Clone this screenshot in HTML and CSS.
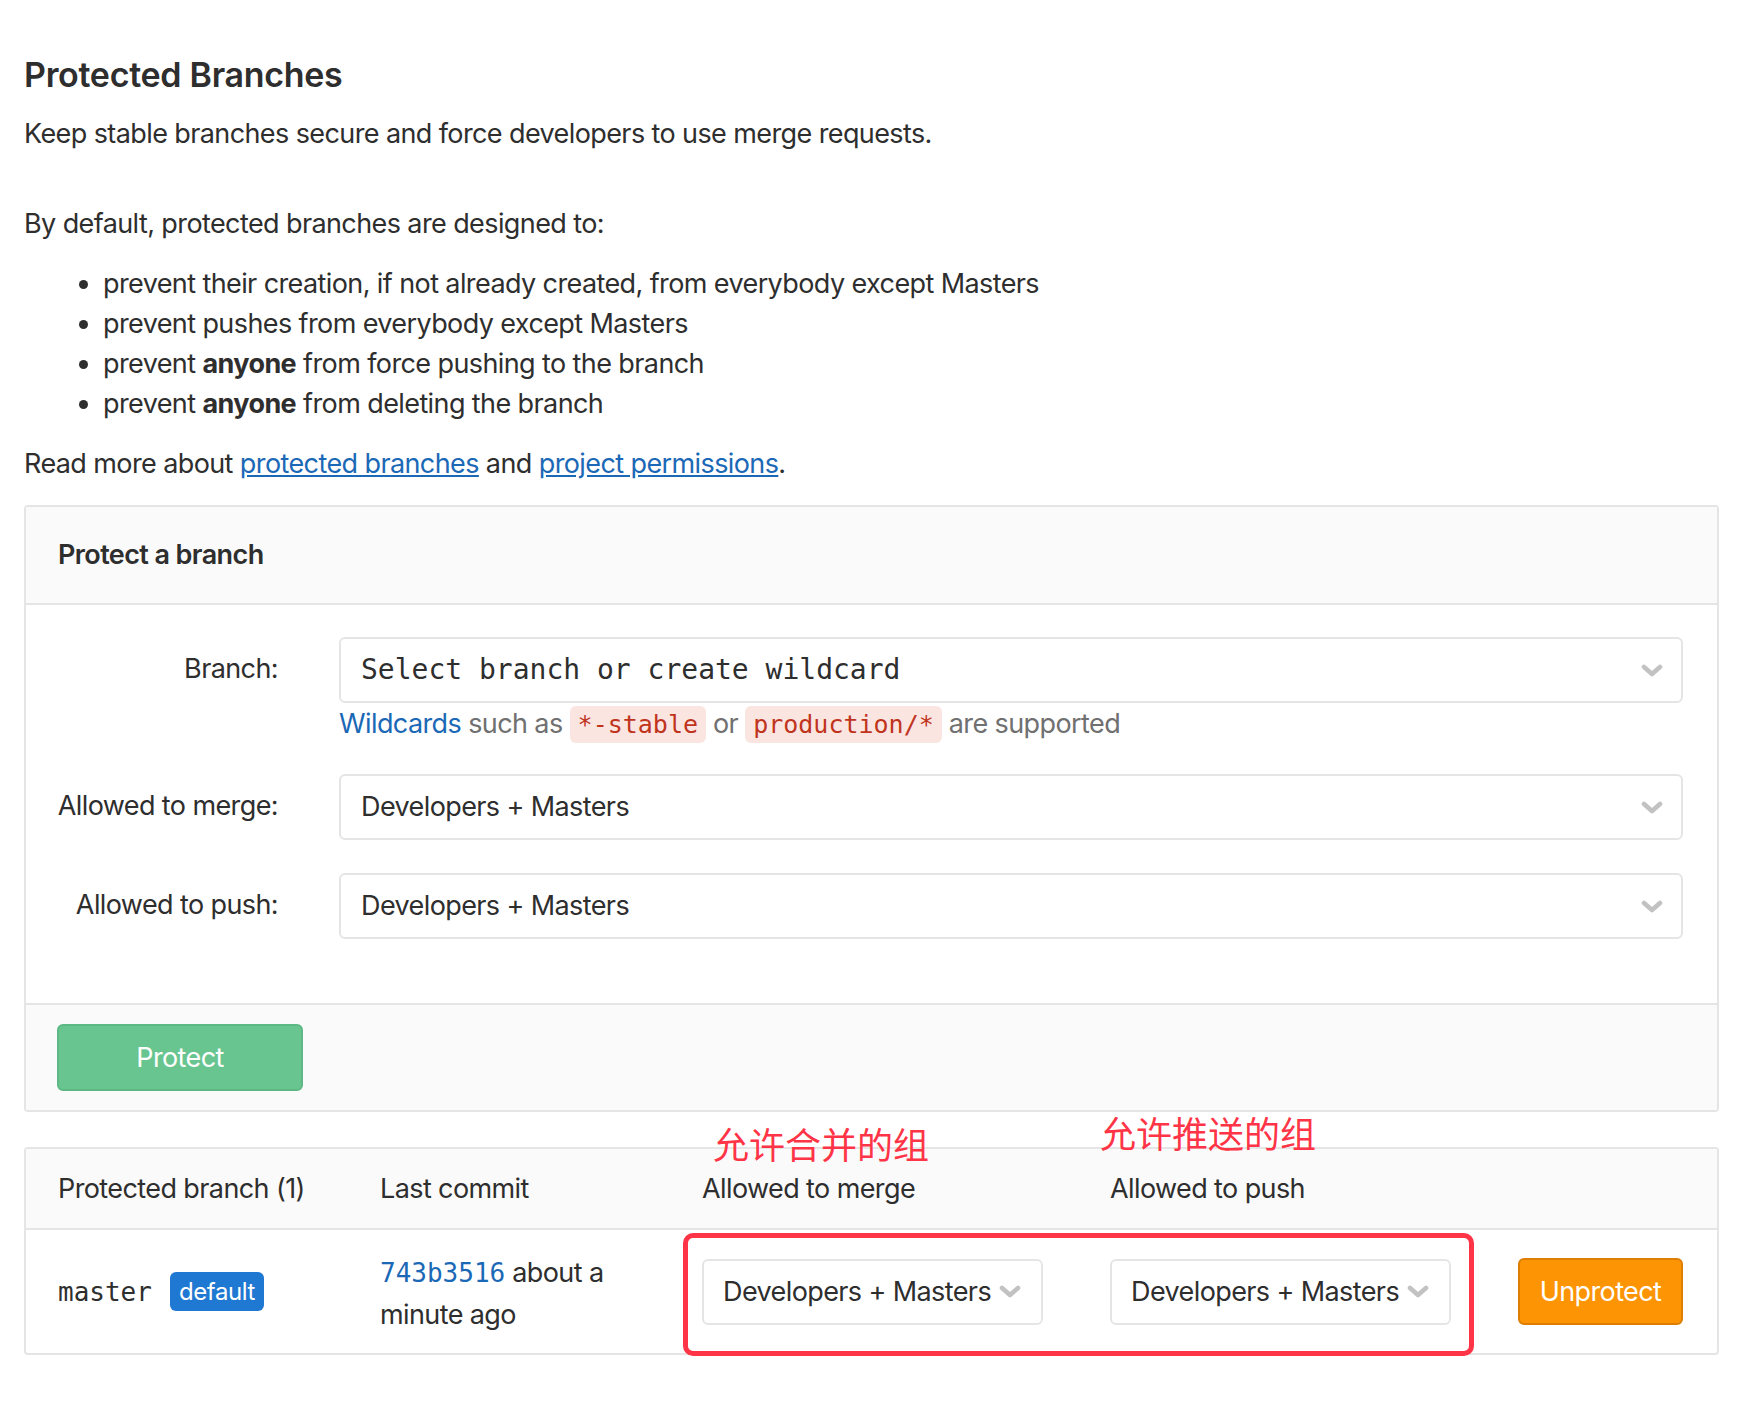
FILE: index.html
```html
<!DOCTYPE html>
<html lang="en">
<head>
<meta charset="utf-8">
<title>Protected Branches</title>
<link rel="stylesheet" href="styles.css">
</head>
<body>
<div class="page">
  <h3 class="title">Protected Branches</h3>
  <p class="lead">Keep stable branches secure and force developers to use merge requests.</p>
  <p class="intro">By default, protected branches are designed to:</p>
  <ul class="rules">
    <li>prevent their creation, if not already created, from everybody except Masters</li>
    <li>prevent pushes from everybody except Masters</li>
    <li>prevent <strong>anyone</strong> from force pushing to the branch</li>
    <li>prevent <strong>anyone</strong> from deleting the branch</li>
  </ul>
  <p class="more">Read more about <a href="#">protected branches</a> and <a href="#">project permissions</a>.</p>

  <form class="card protect-card">
    <div class="card-header">Protect a branch</div>
    <div class="card-body">
      <div class="form-row row-branch">
        <label class="form-label">Branch:</label>
        <div class="form-field">
          <div class="select select-wide mono-select">
            <span>Select branch or create wildcard</span>
            <svg class="chevron" width="22" height="13" viewBox="0 0 22 13"><path d="M3 3 L11 10 L19 3" fill="none" stroke="#c2c2c2" stroke-width="4.6" stroke-linecap="round" stroke-linejoin="round"/></svg>
          </div>
          <div class="help"><a href="#" class="help-link">Wildcards</a> such as <code>*-stable</code> or <code>production/*</code> are supported</div>
        </div>
      </div>
      <div class="form-row row-merge">
        <label class="form-label">Allowed to merge:</label>
        <div class="form-field">
          <div class="select select-wide">
            <span>Developers + Masters</span>
            <svg class="chevron" width="22" height="13" viewBox="0 0 22 13"><path d="M3 3 L11 10 L19 3" fill="none" stroke="#c2c2c2" stroke-width="4.6" stroke-linecap="round" stroke-linejoin="round"/></svg>
          </div>
        </div>
      </div>
      <div class="form-row row-push">
        <label class="form-label">Allowed to push:</label>
        <div class="form-field">
          <div class="select select-wide">
            <span>Developers + Masters</span>
            <svg class="chevron" width="22" height="13" viewBox="0 0 22 13"><path d="M3 3 L11 10 L19 3" fill="none" stroke="#c2c2c2" stroke-width="4.6" stroke-linecap="round" stroke-linejoin="round"/></svg>
          </div>
        </div>
      </div>
    </div>
    <div class="card-footer">
      <button type="button" class="btn btn-protect">Protect</button>
    </div>
  </form>

  <div class="table-wrap">
    <span class="note note-merge">允许合并的组</span>
    <span class="note note-push">允许推送的组</span>
    <div class="card table-card">
      <div class="table-row table-head">
        <div class="cell">Protected branch (1)</div>
        <div class="cell">Last commit</div>
        <div class="cell">Allowed to merge</div>
        <div class="cell">Allowed to push</div>
        <div class="cell"></div>
      </div>
      <div class="table-row table-body">
        <div class="cell cell-branch">
          <span class="ref-name">master</span>
          <span class="badge">default</span>
        </div>
        <div class="cell cell-commit"><a href="#" class="commit-sha">743b3516</a> <span>about a</span><br><span>minute ago</span></div>
        <div class="cell">
          <div class="select select-small">
            <span>Developers + Masters</span>
            <svg class="chevron" width="22" height="13" viewBox="0 0 22 13"><path d="M3 3 L11 10 L19 3" fill="none" stroke="#c2c2c2" stroke-width="4.6" stroke-linecap="round" stroke-linejoin="round"/></svg>
          </div>
        </div>
        <div class="cell">
          <div class="select select-small">
            <span>Developers + Masters</span>
            <svg class="chevron" width="22" height="13" viewBox="0 0 22 13"><path d="M3 3 L11 10 L19 3" fill="none" stroke="#c2c2c2" stroke-width="4.6" stroke-linecap="round" stroke-linejoin="round"/></svg>
          </div>
        </div>
        <div class="cell">
          <button type="button" class="btn btn-unprotect">Unprotect</button>
        </div>
      </div>
      <div class="highlight"></div>
    </div>
  </div>
</div>
</body>
</html>
```

FILE: styles.css
```css
* { box-sizing: border-box; }

html, body {
  margin: 0;
  background: #ffffff;
}

body {
  font-family: Inter, "Liberation Sans", "Noto Sans CJK SC", sans-serif;
  font-size: 27px;
  line-height: 40px;
  color: #2e2e2e;
  letter-spacing: -0.6px;
}

.page {
  padding: 53px 23px 40px 24px;
}

.title {
  margin: 0;
  font-size: 34px;
  line-height: 44px;
  font-weight: 600;
  letter-spacing: -0.3px;
  color: #2e2e2e;
}

.lead {
  margin: 17px 0 0;
}

.intro {
  margin: 50px 0 0;
}

.rules {
  margin: 20px 0 0;
  padding-left: 79px;
}

.more {
  margin: 20px 0 0;
}

a {
  color: #1b69b6;
}

.more a {
  text-decoration: underline;
}

strong {
  font-weight: 700;
}

/* cards */
.card {
  border: 2px solid #e5e5e5;
  border-radius: 4px;
  background: #fff;
}

.protect-card {
  margin-top: 21px;
}

.card-header {
  background: #fafafa;
  border-bottom: 2px solid #e5e5e5;
  padding: 28px 32px;
  font-weight: 600;
}

.card-body {
  padding: 32px 34px 0 0;
  height: 398px;
}

.form-row {
  display: grid;
  grid-template-columns: 252px 1fr;
  column-gap: 61px;
}

.row-branch { margin-bottom: 29px; }
.row-merge { margin-bottom: 33px; }

.form-label {
  text-align: right;
  line-height: 64px;
}

.select {
  display: flex;
  align-items: center;
  justify-content: space-between;
  height: 66px;
  border: 2px solid #e5e5e5;
  border-radius: 6px;
  background: #fff;
  color: #2e2e2e;
  white-space: nowrap;
}

.select-wide {
  padding: 0 18px 0 20px;
}

.mono-select span {
  font-family: "DejaVu Sans Mono", "Liberation Mono", monospace;
  font-size: 28px;
  letter-spacing: 0;
}

.chevron {
  flex: none;
  display: block;
}

.help {
  margin-top: 1px;
  color: #707070;
}

.help-link {
  text-decoration: none;
}

code {
  font-family: "DejaVu Sans Mono", "Liberation Mono", monospace;
  font-size: 25px;
  letter-spacing: 0;
  color: #c0341d;
  background: #fbe5e1;
  border-radius: 6px;
  padding: 4px 8px;
}

.card-footer {
  background: #fafafa;
  border-top: 2px solid #e5e5e5;
  padding: 19px 31px;
}

.btn {
  font-family: inherit;
  font-size: 27px;
  letter-spacing: -0.6px;
  color: #fff;
  border-radius: 6px;
  height: 67px;
  cursor: pointer;
}

.btn-protect {
  width: 246px;
  background: #68c58f;
  border: 2px solid #5db884;
}

/* table */
.table-wrap {
  position: relative;
  margin-top: 35px;
}

.table-card {
  position: relative;
}

.table-row {
  display: grid;
  grid-template-columns: 322px 322px 408px 408px 1fr;
  align-items: center;
}

.table-head {
  height: 81px;
  background: #fafafa;
  border-bottom: 2px solid #e5e5e5;
}

.table-head .cell {
  white-space: nowrap;
  padding-right: 0;
}

.table-body {
  height: 123px;
}

.cell {
  padding-left: 32px;
  padding-right: 32px;
}

.cell-branch {
  display: flex;
  align-items: center;
}

.ref-name {
  font-family: "DejaVu Sans Mono", "Liberation Mono", monospace;
  font-size: 26px;
  letter-spacing: 0;
  color: #2e2e2e;
}

.badge {
  margin-left: 18px;
  background: #1f78d1;
  color: #fff;
  font-size: 24px;
  letter-spacing: -0.4px;
  line-height: 39px;
  height: 39px;
  padding: 0 9px;
  border-radius: 6px;
}

.cell-commit {
  line-height: 42px;
  padding-top: 4px;
  white-space: nowrap;
}

.commit-sha {
  font-family: "DejaVu Sans Mono", "Liberation Mono", monospace;
  font-size: 26px;
  letter-spacing: 0;
  text-decoration: none;
}

.select-small {
  width: 341px;
  padding: 0 20px 0 19px;
}

.btn-unprotect {
  width: 165px;
  background: #fc9403;
  border: 2px solid #de7e00;
}

.highlight {
  position: absolute;
  left: 657px;
  top: 84px;
  width: 791px;
  height: 123px;
  border: 5px solid #ff3446;
  border-radius: 10px;
  pointer-events: none;
}

.note {
  position: absolute;
  font-family: "Noto Sans CJK SC", sans-serif;
  font-size: 36px;
  line-height: 36px;
  font-weight: 400;
  color: #ff3446;
  letter-spacing: 0;
  white-space: nowrap;
  z-index: 2;
}

.note-merge {
  left: 689px;
  top: -22px;
}

.note-push {
  left: 1076px;
  top: -33px;
}
```
